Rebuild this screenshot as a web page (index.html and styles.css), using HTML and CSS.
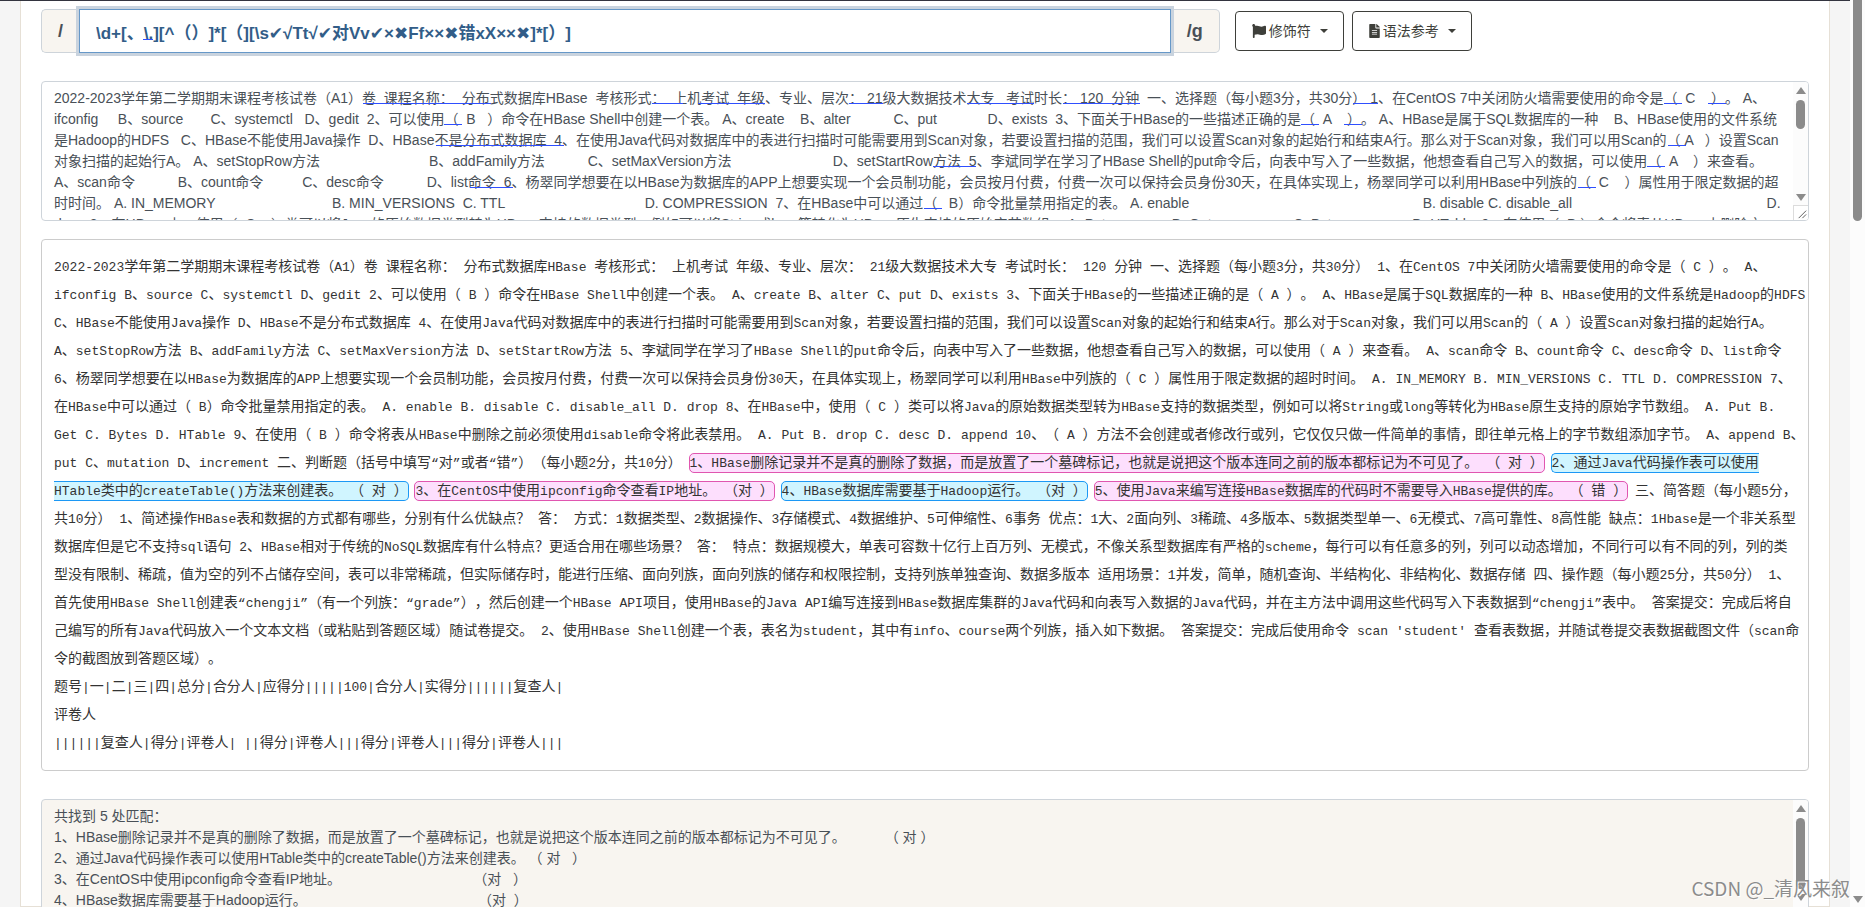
FILE: index.html
```html
<!DOCTYPE html>
<html lang="zh-CN">
<head>
<meta charset="utf-8">
<title>正则表达式测试</title>
<link rel="stylesheet" href="styles.css">
</head>
<body>
<main class="page">
  <div class="toolbar">
    <div class="pattern">
      <label class="addon addon-start" for="regex">/</label>
      <div class="pattern-field">
        <input id="regex" class="pattern-input" type="text" spellcheck="false" value="\d+[、\.][^（）]*[（][\s✔√Tt√✔对Vv✔×✖Ff××✖错xX××✖]*[）]">
        <span class="hint" style="left:64px;top:30px;width:10px"></span>
      </div>
      <span class="addon addon-end">/g</span>
    </div>
    <div class="actions">
      <button class="btn" type="button">
        <svg class="icon" viewBox="0 0 512 512" aria-hidden="true"><path fill="currentColor" d="M349.565 98.783C295.978 98.783 251.721 64 184.348 64c-24.955 0-47.309 4.384-68.045 12.013a55.947 55.947 0 0 0 3.586-23.562C118.117 24.015 94.806 1.206 66.338.048 34.345-1.254 8 24.296 8 56c0 19.026 9.497 35.825 24 45.945V488c0 13.255 10.745 24 24 24h16c13.255 0 24-10.745 24-24v-94.4c28.311-12.064 63.582-22.122 114.435-22.122 53.588 0 97.844 34.783 165.217 34.783 48.169 0 86.667-16.294 122.505-40.858C506.84 359.452 512 349.571 512 339.045v-243.1c0-23.393-24.269-38.87-45.485-29.016-34.338 15.948-76.454 31.854-116.95 31.854z"/></svg>
        <span>修饰符</span><span class="caret"></span>
      </button>
      <button class="btn" type="button">
        <svg class="icon icon-file" viewBox="0 0 384 512" aria-hidden="true"><path fill="currentColor" d="M224 136V0H24C10.700 0 0 10.700 0 24v464c0 13.300 10.700 24 24 24h336c13.300 0 24-10.700 24-24V160H248c-13.200 0-24-10.800-24-24zm64 236c0 6.600-5.400 12-12 12H108c-6.600 0-12-5.400-12-12v-8c0-6.600 5.400-12 12-12h168c6.600 0 12 5.400 12 12v8zm0-64c0 6.600-5.400 12-12 12H108c-6.600 0-12-5.400-12-12v-8c0-6.600 5.400-12 12-12h168c6.600 0 12 5.400 12 12v8zm0-72v8c0 6.600-5.400 12-12 12H108c-6.600 0-12-5.400-12-12v-8c0-6.600 5.400-12 12-12h168c6.600 0 12 5.400 12 12zm96-114.100v6.100H256V0h6.100c6.400 0 12.500 2.500 17 7l97.900 98c4.500 4.500 7 10.600 7 16.900z"/></svg>
        <span>语法参考</span><span class="caret"></span>
      </button>
    </div>
  </div>

  <div class="field source">
    <textarea class="area" aria-label="待匹配文本" spellcheck="false">2022-2023学年第二学期期末课程考核试卷（A1）卷  课程名称：  分布式数据库HBase  考核形式：  上机考试  年级、专业、层次： 21级大数据技术大专   考试时长： 120  分钟  一、选择题（每小题3分，共30分） 1、在CentOS 7中关闭防火墙需要使用的命令是（  C    ）。 A、
ifconfig     B、source       C、systemctl   D、gedit  2、可以使用（  B   ）命令在HBase Shell中创建一个表。 A、create    B、alter           C、put             D、exists  3、下面关于HBase的一些描述正确的是（  A    ）。 A、HBase是属于SQL数据库的一种    B、HBase使用的文件系统
是Hadoop的HDFS   C、HBase不能使用Java操作  D、HBase不是分布式数据库  4、在使用Java代码对数据库中的表进行扫描时可能需要用到Scan对象，若要设置扫描的范围，我们可以设置Scan对象的起始行和结束A行。那么对于Scan对象，我们可以用Scan的（ A   ）设置Scan
对象扫描的起始行A。 A、setStopRow方法                            B、addFamily方法           C、setMaxVersion方法                          D、setStartRow方法  5、李斌同学在学习了HBase Shell的put命令后，向表中写入了一些数据，他想查看自己写入的数据，可以使用（  A    ）来查看。
A、scan命令           B、count命令          C、desc命令           D、list命令  6、杨翠同学想要在以HBase为数据库的APP上想要实现一个会员制功能，会员按月付费，付费一次可以保持会员身份30天，在具体实现上，杨翠同学可以利用HBase中列族的（  C    ）属性用于限定数据的超
时时间。 A. IN_MEMORY                              B. MIN_VERSIONS  C. TTL                                    D. COMPRESSION  7、在HBase中可以通过（   B）命令批量禁用指定的表。 A. enable                                                            B. disable C. disable_all                                                  D.
drop  8、在HBase中，使用（  C    ）类可以将Java的原始数据类型转为HBase支持的数据类型，例如可以将String或long等转化为HBase原生支持的原始字节数组。 A. Put                 B. Get                     C. Bytes                 D. HTable  9、在使用（  B ）命令将表从HBase中删除之</textarea>
    <div class="hints" aria-hidden="true">
      <span class="hint" style="left:321px;top:21px;width:128px"></span>
      <span class="hint" style="left:610px;top:21px;width:31px"></span>
      <span class="hint" style="left:656px;top:21px;width:67px"></span>
      <span class="hint" style="left:807px;top:21px;width:34px"></span>
      <span class="hint" style="left:925px;top:21px;width:67px"></span>
      <span class="hint" style="left:1021px;top:21px;width:77px"></span>
      <span class="hint" style="left:1311px;top:21px;width:25px"></span>
      <span class="hint" style="left:1622px;top:21px;width:18px"></span>
      <span class="hint" style="left:1666px;top:21px;width:18px"></span>
      <span class="hint" style="left:402px;top:42px;width:18px"></span>
      <span class="hint" style="left:1259px;top:42px;width:18px"></span>
      <span class="hint" style="left:1302px;top:42px;width:18px"></span>
      <span class="hint" style="left:394px;top:63px;width:128px"></span>
      <span class="hint" style="left:1626px;top:63px;width:18px"></span>
      <span class="hint" style="left:891px;top:84px;width:43px"></span>
      <span class="hint" style="left:1605px;top:84px;width:18px"></span>
      <span class="hint" style="left:428px;top:105px;width:43px"></span>
      <span class="hint" style="left:1536px;top:105px;width:18px"></span>
      <span class="hint" style="left:882px;top:126px;width:18px"></span>
    </div>
    <div class="bar" aria-hidden="true">
      <span class="arrow up"></span><span class="thumb thumb-short"></span><span class="space"></span><span class="arrow down"></span>
      <svg class="grip" viewBox="0 0 15 15"><path d="M5 13L13 5M9 13L13 9" stroke="#555" fill="none"/></svg>
    </div>
  </div>

  <pre class="preview" id="preview">2022-2023学年第二学期期末课程考核试卷（A1）卷 课程名称： 分布式数据库HBase 考核形式： 上机考试 年级、专业、层次： 21级大数据技术大专 考试时长： 120 分钟 一、选择题（每小题3分，共30分） 1、在CentOS 7中关闭防火墙需要使用的命令是（ C ）。 A、
ifconfig B、source C、systemctl D、gedit 2、可以使用（ B ）命令在HBase Shell中创建一个表。 A、create B、alter C、put D、exists 3、下面关于HBase的一些描述正确的是（ A ）。 A、HBase是属于SQL数据库的一种 B、HBase使用的文件系统是Hadoop的HDFS
C、HBase不能使用Java操作 D、HBase不是分布式数据库 4、在使用Java代码对数据库中的表进行扫描时可能需要用到Scan对象，若要设置扫描的范围，我们可以设置Scan对象的起始行和结束A行。那么对于Scan对象，我们可以用Scan的（ A ）设置Scan对象扫描的起始行A。
A、setStopRow方法 B、addFamily方法 C、setMaxVersion方法 D、setStartRow方法 5、李斌同学在学习了HBase Shell的put命令后，向表中写入了一些数据，他想查看自己写入的数据，可以使用（ A ）来查看。 A、scan命令 B、count命令 C、desc命令 D、list命令
6、杨翠同学想要在以HBase为数据库的APP上想要实现一个会员制功能，会员按月付费，付费一次可以保持会员身份30天，在具体实现上，杨翠同学可以利用HBase中列族的（ C ）属性用于限定数据的超时时间。 A. IN_MEMORY B. MIN_VERSIONS C. TTL D. COMPRESSION 7、
在HBase中可以通过（ B）命令批量禁用指定的表。 A. enable B. disable C. disable_all D. drop 8、在HBase中，使用（ C ）类可以将Java的原始数据类型转为HBase支持的数据类型，例如可以将String或long等转化为HBase原生支持的原始字节数组。 A. Put B.
Get C. Bytes D. HTable 9、在使用（ B ）命令将表从HBase中删除之前必须使用disable命令将此表禁用。 A. Put B. drop C. desc D. append 10、（ A ）方法不会创建或者修改行或列，它仅仅只做一件简单的事情，即往单元格上的字节数组添加字节。 A、append B、
put C、mutation D、increment 二、判断题（括号中填写“对”或者“错”）（每小题2分，共10分） <mark class="hit odd">1、HBase删除记录并不是真的删除了数据，而是放置了一个墓碑标记，也就是说把这个版本连同之前的版本都标记为不可见了。 （ 对 ）</mark> <mark class="hit even">2、通过Java代码操作表可以使用
HTable类中的createTable()方法来创建表。 （ 对 ）</mark> <mark class="hit odd">3、在CentOS中使用ipconfig命令查看IP地址。 （对 ）</mark> <mark class="hit even">4、HBase数据库需要基于Hadoop运行。 （对 ）</mark> <mark class="hit odd">5、使用Java来编写连接HBase数据库的代码时不需要导入HBase提供的库。 （ 错 ）</mark> 三、简答题（每小题5分，
共10分） 1、简述操作HBase表和数据的方式都有哪些，分别有什么优缺点？ 答： 方式：1数据类型、2数据操作、3存储模式、4数据维护、5可伸缩性、6事务 优点：1大、2面向列、3稀疏、4多版本、5数据类型单一、6无模式、7高可靠性、8高性能 缺点：1Hbase是一个非关系型
数据库但是它不支持sql语句 2、HBase相对于传统的NoSQL数据库有什么特点？更适合用在哪些场景？ 答： 特点：数据规模大，单表可容数十亿行上百万列、无模式，不像关系型数据库有严格的scheme，每行可以有任意多的列，列可以动态增加，不同行可以有不同的列，列的类
型没有限制、稀疏，值为空的列不占储存空间，表可以非常稀疏，但实际储存时，能进行压缩、面向列族，面向列族的储存和权限控制，支持列族单独查询、数据多版本 适用场景：1并发，简单，随机查询、半结构化、非结构化、数据存储 四、操作题（每小题25分，共50分） 1、
首先使用HBase Shell创建表“chengji”（有一个列族：“grade”），然后创建一个HBase API项目，使用HBase的Java API编写连接到HBase数据库集群的Java代码和向表写入数据的Java代码，并在主方法中调用这些代码写入下表数据到“chengji”表中。 答案提交：完成后将自
己编写的所有Java代码放入一个文本文档（或粘贴到答题区域）随试卷提交。 2、使用HBase Shell创建一个表，表名为student，其中有info、course两个列族，插入如下数据。 答案提交：完成后使用命令 scan 'student' 查看表数据，并随试卷提交表数据截图文件（scan命
令的截图放到答题区域）。
题号|一|二|三|四|总分|合分人|应得分|||||100|合分人|实得分||||||复查人|
评卷人
||||||复查人|得分|评卷人| ||得分|评卷人|||得分|评卷人|||得分|评卷人|||</pre>

  <div class="field result">
    <textarea class="area" aria-label="匹配结果" readonly>共找到 5 处匹配：
1、HBase删除记录并不是真的删除了数据，而是放置了一个墓碑标记，也就是说把这个版本连同之前的版本都标记为不可见了。          （ 对 ）
2、通过Java代码操作表可以使用HTable类中的createTable()方法来创建表。 （ 对   ）
3、在CentOS中使用ipconfig命令查看IP地址。                                  （对   ）
4、HBase数据库需要基于Hadoop运行。                                            （对  ）</textarea>
    <div class="bar" aria-hidden="true">
      <span class="arrow up"></span><span class="thumb thumb-long"></span><span class="space"></span><span class="arrow down"></span>
    </div>
  </div>
</main>
<div class="page-bar" aria-hidden="true"><span class="page-thumb"></span><span class="arrow down"></span></div>
<div class="watermark">CSDN @_清风来叙</div>
<script src="preview.js"></script>
</body>
</html>
```
FILE: styles.css
```css
* {
  box-sizing: border-box;
}

body {
  margin: 0;
  height: 100vh;
  overflow: hidden;
  display: flex;
  align-items: stretch;
  background: #f5f5f5;
  color: #3e3f3a;
  font: 14px/21px "Liberation Sans", "Noto Sans CJK SC", sans-serif;
  text-spacing-trim: space-all;
}

.page {
  flex: 1;
  min-width: 0;
  margin-left: 20px;
  margin-right: 20px;
  padding: 8px 20px 0;
  background: #fff;
  border: 1px solid #e6e0d6;
  border-top: 0;
}

body::before {
  content: "";
  position: absolute;
  inset: 0 15px auto 0;
  height: 1px;
  background: #33343f;
}

.toolbar {
  display: flex;
  align-items: center;
  margin: 1px 0 28px;
}

.pattern {
  flex: 0 0 66.67%;
  display: flex;
  height: 44px;
}

.addon {
  display: flex;
  align-items: center;
  justify-content: center;
  background: #f8f5f0;
  border: 1px solid #ced4da;
  color: #495057;
  font-size: 18px;
  font-weight: bold;
}

.addon-start {
  width: 38px;
  border-right: 0;
  border-radius: 5px 0 0 5px;
}

.addon-end {
  width: 49px;
  border-left: 0;
  border-radius: 0 5px 5px 0;
}

.pattern-field {
  flex: 1;
  position: relative;
}

.pattern-input {
  width: 100%;
  height: 44px;
  padding: 0 16px;
  border: 1px solid #6698c8;
  outline: 0;
  box-shadow: 0 0 0 3px #c9d3de;
  color: #325d88;
  background: #fff;
  font: bold 17px "Liberation Sans", "Noto Sans CJK SC", "DejaVu Sans", sans-serif;
  text-spacing-trim: space-all;
}

.actions {
  display: flex;
  gap: 8px;
  margin-left: 15px;
}

.btn {
  display: flex;
  align-items: center;
  gap: 3px;
  height: 40px;
  padding: 0 15px 0 16px;
  border: 1px solid #3e3f3a;
  border-radius: 4px;
  background: #fff;
  color: #3e3f3a;
  font: 14px/21px "Liberation Sans", "Noto Sans CJK SC", sans-serif;
}

.icon {
  width: 14px;
  height: 14px;
}

.icon-file {
  width: 11px;
}

.caret {
  margin-left: 6px;
  border: 4px solid transparent;
  border-top-color: currentColor;
  border-bottom: 0;
}

.field {
  position: relative;
  display: flex;
  overflow: hidden;
  border: 1px solid #ced4da;
  border-radius: 4px;
}

.source {
  height: 140px;
  margin-bottom: 18px;
  background: #fff;
}

.result {
  height: 120px;
  background: #f8f5f0;
}

.area {
  flex: 1;
  min-width: 0;
  padding: 6px 0 0 12px;
  border: 0;
  outline: 0;
  resize: none;
  overflow: hidden;
  white-space: pre;
  background: transparent;
  color: #495057;
  font: 14px/21px "Liberation Sans", "Noto Sans CJK SC", sans-serif;
  text-spacing-trim: space-all;
}

.hints {
  position: absolute;
  inset: 0 auto auto 0;
}

.hint {
  position: absolute;
  height: 1px;
  background: #2f4fff;
}

.bar {
  flex: 0 0 15px;
  display: flex;
  flex-direction: column;
  align-items: center;
  padding-top: 5px;
  background: #fcfcfc;
}

.arrow {
  border: 5px solid transparent;
}

.up {
  border-top: 0;
  border-bottom: 7px solid #8b8b8b;
}

.down {
  border-bottom: 0;
  border-top: 7px solid #8b8b8b;
}

.thumb {
  width: 9px;
  margin-top: 6px;
  border-radius: 5px;
  background: #8b8b8b;
}

.thumb-short {
  height: 29px;
}

.thumb-long {
  height: 71px;
}

.space {
  flex: 1;
}

.result .space {
  flex: 0 0 5px;
}

.grip {
  width: 15px;
  height: 15px;
  margin-top: 4px;
  border: 1px solid #dcdcdc;
  border-width: 1px 0 0 1px;
  background: #fff;
}

.preview {
  margin: 0 0 28px;
  padding: 13px 12px;
  overflow: hidden;
  border: 1px solid #ccc;
  border-radius: 4px;
  color: #333;
  font: 14px/28px "Liberation Mono", "Noto Sans CJK SC", monospace;
  text-spacing-trim: space-all;
}

.latin {
  font-size: 13px;
  line-height: 1;
}

.hit {
  margin: 0 -1px;
  padding: 1px 0;
  border: 1px solid;
  border-radius: 5px;
  color: inherit;
}

.odd {
  border-color: #e056b0;
  background: #fddffd;
}

.even {
  border-color: #1c98f5;
  background: #d0f5ff;
}

.page-bar {
  flex: 0 0 15px;
  display: flex;
  flex-direction: column;
  align-items: center;
  justify-content: space-between;
  padding-bottom: 4px;
  background: #fcfcfc;
}

.page-thumb {
  width: 9px;
  height: 221px;
  border-radius: 0 0 5px 5px;
  background: #8b8b8b;
}

.watermark {
  position: absolute;
  right: 15px;
  bottom: 5px;
  color: #8c8c8c;
  font: 19px/28px "Noto Sans CJK SC", sans-serif;
  text-shadow: 1px 1px 0 #fff;
}
```
FILE: preview.js
```javascript
// Sets Latin runs one size smaller than the Chinese text around them.
const preview = document.getElementById("preview");
const walker = document.createTreeWalker(preview, NodeFilter.SHOW_TEXT);
const nodes = [];
while (walker.nextNode()) nodes.push(walker.currentNode);

for (const node of nodes) {
  const parts = document.createDocumentFragment();
  for (const run of node.data.split(/(\n|[ -~“”]+)/)) {
    if (!run) continue;
    if (/^[ -~“”]/.test(run)) {
      const span = document.createElement("span");
      span.className = "latin";
      span.textContent = run;
      parts.append(span);
    } else {
      parts.append(run);
    }
  }
  node.replaceWith(parts);
}
```
